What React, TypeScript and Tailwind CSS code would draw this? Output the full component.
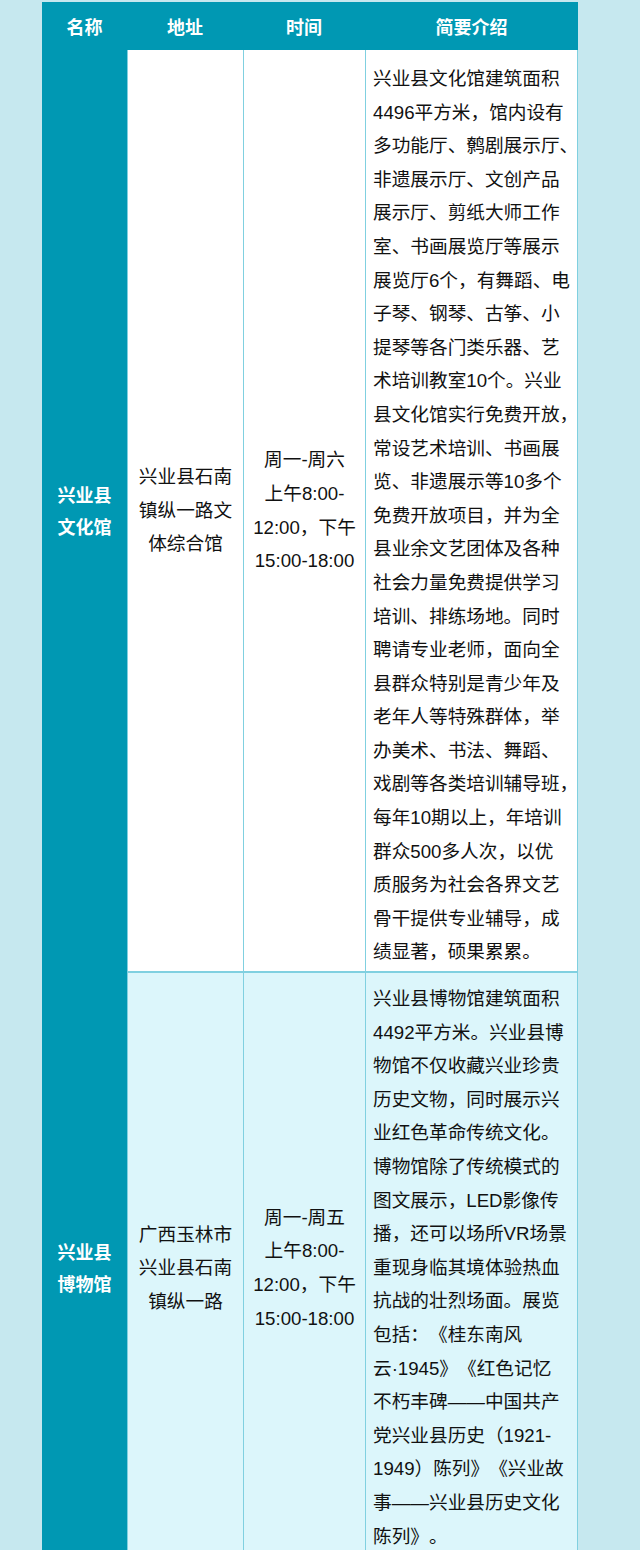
const rows = [
  {
    name: ["兴业县", "文化馆"],
    address: ["兴业县石南", "镇纵一路文", "体综合馆"],
    time: ["周一-周六", "上午8:00-", "12:00，下午", "15:00-18:00"],
    intro: [
      "兴业县文化馆建筑面积",
      "4496平方米，馆内设有",
      "多功能厅、鹩剧展示厅、",
      "非遗展示厅、文创产品",
      "展示厅、剪纸大师工作",
      "室、书画展览厅等展示",
      "展览厅6个，有舞蹈、电",
      "子琴、钢琴、古筝、小",
      "提琴等各门类乐器、艺",
      "术培训教室10个。兴业",
      "县文化馆实行免费开放，",
      "常设艺术培训、书画展",
      "览、非遗展示等10多个",
      "免费开放项目，并为全",
      "县业余文艺团体及各种",
      "社会力量免费提供学习",
      "培训、排练场地。同时",
      "聘请专业老师，面向全",
      "县群众特别是青少年及",
      "老年人等特殊群体，举",
      "办美术、书法、舞蹈、",
      "戏剧等各类培训辅导班，",
      "每年10期以上，年培训",
      "群众500多人次，以优",
      "质服务为社会各界文艺",
      "骨干提供专业辅导，成",
      "绩显著，硕果累累。",
    ],
    bg: "bg-white",
    pad: "pt-[12px] pb-[2px]",
  },
  {
    name: ["兴业县", "博物馆"],
    address: ["广西玉林市", "兴业县石南", "镇纵一路"],
    time: ["周一-周五", "上午8:00-", "12:00，下午", "15:00-18:00"],
    intro: [
      "兴业县博物馆建筑面积",
      "4492平方米。兴业县博",
      "物馆不仅收藏兴业珍贵",
      "历史文物，同时展示兴",
      "业红色革命传统文化。",
      "博物馆除了传统模式的",
      "图文展示，LED影像传",
      "播，还可以场所VR场景",
      "重现身临其境体验热血",
      "抗战的壮烈场面。展览",
      "包括：《桂东南风",
      "云·1945》《红色记忆",
      "不朽丰碑——中国共产",
      "党兴业县历史（1921-",
      "1949）陈列》《兴业故",
      "事——兴业县历史文化",
      "陈列》。",
    ],
    bg: "bg-[#dcf6fb]",
    pad: "pt-[9px] pb-[10px]",
  },
];

function Lines({ lines }: { lines: string[] }) {
  return (
    <>
      {lines.map((l, i) => (
        <div key={i} className="whitespace-nowrap">
          {l}
        </div>
      ))}
    </>
  );
}

export default function App() {
  return (
    <div
      className="min-h-[1550px] bg-[#c6e8ef] pl-[42px] pt-[2px] text-[#111] [text-spacing-trim:space-all]"
      style={{ fontFamily: '"Liberation Sans", "Noto Sans CJK SC", sans-serif' }}
    >
      <div className="w-[536px] grid grid-cols-[85px_116px_122px_213px]">
        {["名称", "地址", "时间", "简要介绍"].map((h) => (
          <div
            key={h}
            className="h-[48px] bg-[#0098b3] flex items-center justify-center pt-[4px] text-[18px] font-bold text-white"
          >
            {h}
          </div>
        ))}

        {rows.map((r, i) => (
          <div key={i} className="contents">
            <div className="bg-[#0098b3] flex flex-col items-center justify-center text-[18px] leading-[32px] font-bold text-white">
              <Lines lines={r.name} />
            </div>
            <div
              className={`${r.bg} border-l border-b-2 border-[#80d0e0] flex flex-col items-center justify-center text-center text-[18.67px] leading-[33.6px]`}
            >
              <Lines lines={r.address} />
            </div>
            <div
              className={`${r.bg} border-l border-b-2 border-[#80d0e0] flex flex-col items-center justify-center text-center text-[18.67px] leading-[33.6px]`}
            >
              <Lines lines={r.time} />
            </div>
            <div
              className={`${r.bg} border-l border-r border-b-2 border-[#80d0e0] pl-[7px] ${r.pad} text-[18.67px] leading-[33.6px]`}
            >
              <Lines lines={r.intro} />
            </div>
          </div>
        ))}
      </div>
    </div>
  );
}
